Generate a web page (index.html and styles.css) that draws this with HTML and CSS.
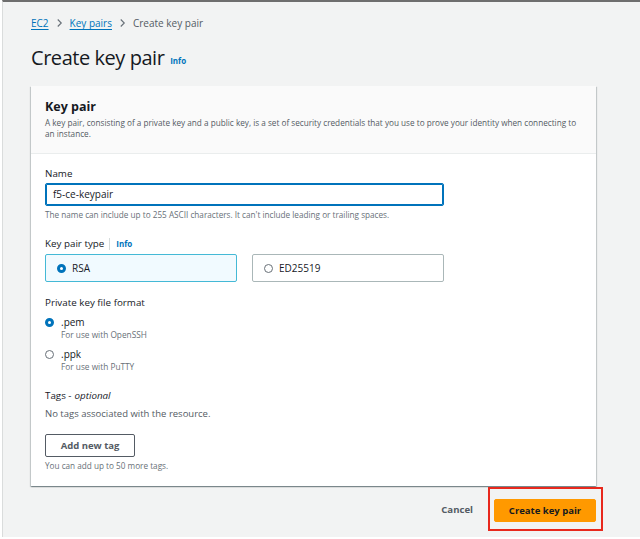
FILE: index.html
```html
<!DOCTYPE html>
<html>
<head>
<meta charset="utf-8">
<link rel="stylesheet" href="styles.css">
</head>
<body>
<div class="frame">
  <nav class="crumbs">
    <a class="crumb-link">EC2</a>
    <svg class="chev" viewBox="0 0 8 10" width="7" height="10"><path d="M2 1l4 4-4 4" fill="none" stroke="#687078" stroke-width="1.3"/></svg>
    <a class="crumb-link">Key pairs</a>
    <svg class="chev" viewBox="0 0 8 10" width="7" height="10"><path d="M2 1l4 4-4 4" fill="none" stroke="#687078" stroke-width="1.3"/></svg>
    <span class="crumb-current">Create key pair</span>
  </nav>
  <h1 class="title">Create key pair <span class="info">Info</span></h1>

  <section class="card">
    <div class="card-head">
      <h2 class="card-title">Key pair</h2>
      <p class="card-desc">A key pair, consisting of a private key and a public key, is a set of security credentials that you use to prove your identity when connecting to an instance.</p>
    </div>
    <div class="card-body">
      <div class="field field-name">
        <div class="label">Name</div>
        <div class="input">f5-ce-keypair</div>
        <div class="hint">The name can include up to 255 ASCII characters. It can't include leading or trailing spaces.</div>
      </div>

      <div class="field">
        <div class="label">Key pair type <span class="divider"></span><span class="info">Info</span></div>
        <div class="tiles">
          <div class="tile tile-on"><span class="radio radio-on"></span>RSA</div>
          <div class="tile"><span class="radio"></span>ED25519</div>
        </div>
      </div>

      <div class="field field-format">
        <div class="label">Private key file format</div>
        <div class="opt">
          <span class="radio radio-on"></span>
          <div><div class="opt-name">.pem</div><div class="opt-sub">For use with OpenSSH</div></div>
        </div>
        <div class="opt">
          <span class="radio"></span>
          <div><div class="opt-name">.ppk</div><div class="opt-sub">For use with PuTTY</div></div>
        </div>
      </div>

      <div class="field">
        <div class="label">Tags - <i>optional</i></div>
        <div class="none">No tags associated with the resource.</div>
        <button class="btn-normal">Add new tag</button>
        <div class="hint">You can add up to 50 more tags.</div>
      </div>
    </div>
  </section>

  <div class="footer">
    <button class="btn-link">Cancel</button>
    <div class="highlight"><button class="btn-primary">Create key pair</button></div>
  </div>
</div>
</body>
</html>
```

FILE: styles.css
```css
html, body {
  margin: 0;
  padding: 0;
  background: #ffffff;
}
body {
  font-family: "Open Sans", "Noto Sans", "Liberation Sans", sans-serif;
  color: #16191f;
}
.frame {
  margin-left: 2px;
  border-top: 2px solid #6e6e6e;
  border-left: 1px solid #dadcdc;
  background: #f2f3f3;
  height: 537px;
  box-sizing: border-box;
  padding: 13px 0 0 28px;
  width: 638px;
}
.crumbs {
  display: flex;
  align-items: center;
  gap: 7px;
  font-size: 10px;
  height: 16px;
}
.crumb-link {
  color: #0073bb;
  text-decoration: underline;
  text-underline-offset: 2px;
}
.crumb-current {
  color: #545b64;
}
.chev { display: block; }
.title {
  margin: 12px 0 0 0;
  font-size: 20px;
  font-weight: 400;
  line-height: 30px;
  color: #16191f;
  letter-spacing: -0.45px;
}
.info {
  color: #0073bb;
  font-size: 8px;
  font-weight: 700;
  letter-spacing: 0;
  margin-left: 1px;
  vertical-align: 1px;
}
.card {
  margin-top: 10px;
  width: 565px;
  background: #ffffff;
  box-shadow: 0 1px 1px 0 rgba(0,28,36,0.3), 1px 1px 1px 0 rgba(0,28,36,0.15), -1px 1px 1px 0 rgba(0,28,36,0.15);
}
.card-head {
  background: #fafafa;
  border-bottom: 1px solid #eaeded;
  padding: 12px 14px 0 14px;
  height: 68px;
  box-sizing: border-box;
}
.card-title {
  margin: 0;
  font-size: 12.5px;
  font-weight: 700;
  line-height: 18px;
}
.card-desc {
  margin: 1px 0 0 0;
  font-size: 8.2px;
  line-height: 11px;
  color: #545b64;
}
.card-body {
  padding: 13px 14px 15px 14px;
}
.field { margin-bottom: 14px; }
.field-name { margin-bottom: 17px; }
.field:last-child { margin-bottom: 0; }
.label {
  font-size: 9.8px;
  line-height: 14px;
  color: #16191f;
  display: flex;
  align-items: center;
}
.field-format { margin-bottom: 16px; }
.label i { margin-left: 3px; }
.divider {
  display: inline-block;
  width: 1px;
  height: 12px;
  background: #d5dbdb;
  margin: 0 6px 0 5px;
}
.label .info { font-size: 8px; margin-left: 0; }
.input {
  margin-top: 2px;
  width: 399px;
  height: 23px;
  box-sizing: border-box;
  border: 1px solid #0073bb;
  box-shadow: 0 0 0 1px #0073bb inset;
  border-radius: 2px;
  padding: 0 7px;
  font-size: 10px;
  line-height: 21px;
}
.hint {
  margin-top: 3px;
  font-size: 8.2px;
  line-height: 11px;
  color: #687078;
}
.tiles {
  margin-top: 3px;
  display: flex;
  gap: 15px;
}
.tile {
  width: 192px;
  height: 28px;
  box-sizing: border-box;
  border: 1px solid #aab7b8;
  border-radius: 2px;
  display: flex;
  align-items: center;
  padding-left: 11px;
  font-size: 10px;
  gap: 6px;
  background: #ffffff;
}
.tile-on {
  background-color: #f1faff;
  border-color: #44b9d6;
  background-image: radial-gradient(#dbeef8 0.5px, transparent 0.6px);
  background-size: 4px 4px;
}
.radio {
  width: 9px;
  height: 9px;
  box-sizing: border-box;
  border: 1px solid #687078;
  border-radius: 50%;
  background: #ffffff;
  flex: none;
  display: inline-block;
}
.radio-on {
  border: 3px solid #0073bb;
}
.opt {
  display: flex;
  align-items: flex-start;
  gap: 7px;
  margin-top: 5px;
}
.opt .radio { margin-top: 3px; }
.opt-name {
  font-size: 10px;
  line-height: 14px;
}
.opt-sub {
  font-size: 8.3px;
  line-height: 12px;
  color: #687078;
}
.opt + .opt { margin-top: 6px; }
.none {
  margin-top: 4px;
  font-size: 9.5px;
  line-height: 13px;
  color: #545b64;
}
.btn-normal {
  margin-top: 14px;
  display: block;
  width: 90px;
  height: 23px;
  border: 1px solid #545b64;
  border-radius: 2px;
  background: #ffffff;
  font-family: inherit;
  font-size: 9.5px;
  font-weight: 700;
  color: #545b64;
  padding: 0;
}
.footer {
  width: 572px;
  display: flex;
  justify-content: flex-end;
  align-items: center;
  margin-top: 1px;
}
.btn-link {
  background: none;
  border: none;
  font-family: inherit;
  font-size: 9.6px;
  font-weight: 700;
  color: #545b64;
  padding: 0;
  margin-right: 15px;
  margin-top: 1px;
}
.highlight {
  border: 2px solid #e8281c;
  padding: 10px 5px 7px 4px;
}
.btn-primary {
  display: block;
  width: 102px;
  height: 23px;
  background: #ff9900;
  border: 1px solid #ff9900;
  border-radius: 2px;
  font-family: inherit;
  font-size: 9.5px;
  font-weight: 700;
  color: #16191f;
  padding: 0;
}
```
